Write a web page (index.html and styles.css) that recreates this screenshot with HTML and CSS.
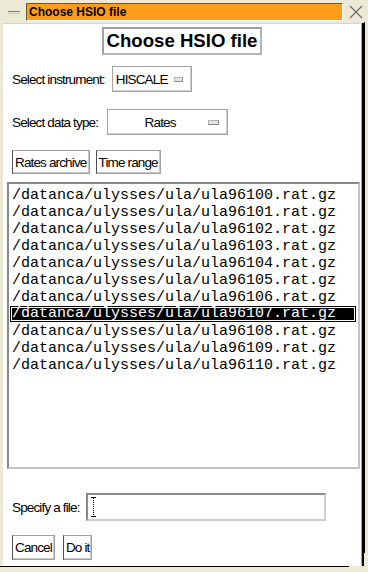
FILE: index.html
```html
<!DOCTYPE html>
<html lang="en">
<head>
    <meta charset="UTF-8">
    <title>Choose HSIO file</title>
    <link rel="stylesheet" href="styles.css">
</head>
<body>

<div class="window">
    <div class="titlebar">
        <span class="minimize"></span>
        <div class="title">Choose HSIO file</div>
        <svg class="close" width="14" height="14" viewBox="0 0 14 14">
            <path d="M1 1 L13 13 M13 1 L1 13" stroke="#6a6a6a" stroke-width="1.2" fill="none"/>
        </svg>
    </div>

    <div class="client">
        <div class="heading">Choose HSIO file</div>

        <div class="row row-instrument">
            <span class="label">Select instrument:</span>
            <div class="menubutton instrument">
                <span class="menutext">HISCALE</span>
                <span class="indicator"></span>
            </div>
        </div>

        <div class="row row-type">
            <span class="label">Select data type:</span>
            <div class="menubutton datatype">
                <span class="menutext">Rates</span>
                <span class="indicator"></span>
            </div>
        </div>

        <div class="row row-buttons">
            <button class="btn">Rates archive</button>
            <button class="btn">Time range</button>
        </div>

        <div class="filelist" id="filelist"></div>

        <div class="row row-file">
            <span class="label">Specify a file:</span>
            <div class="entry">
                <svg class="ibeam" width="5" height="20" viewBox="0 0 5 20">
                    <path d="M0 0.5 H5 M0 19.5 H5" stroke="#000" stroke-width="1"/>
                    <path d="M2.5 1 V19" stroke="#000" stroke-width="1" stroke-dasharray="1 1"/>
                </svg>
            </div>
        </div>

        <div class="row row-actions">
            <button class="btn">Cancel</button>
            <button class="btn">Do it</button>
        </div>
    </div>

    <span class="corner corner-v"></span>
    <span class="corner corner-h"></span>
</div>

<script>
    var lista = document.getElementById('filelist');
    for (var i = 100; i <= 110; i++) {
        var linha = document.createElement('div');
        linha.className = 'fileitem';
        if (i === 107) linha.className += ' selected';
        linha.textContent = '/datanca/ulysses/ula/ula96' + i + '.rat.gz';
        lista.appendChild(linha);
    }
</script>

</body>
</html>
```

FILE: styles.css
```css
body {
    margin: 0;
    background-color: #ecead4;
    font-family: "Liberation Sans", Arial, sans-serif;
}
.window {
    position: relative;
    width: 368px;
    height: 572px;
    overflow: hidden;
}
.titlebar {
    display: flex;
    align-items: center;
    height: 23px;
}
.minimize {
    width: 12px;
    height: 1px;
    margin-left: 8px;
    margin-top: 2px;
    border-top: 1px solid #7c7c7c;
    border-bottom: 1px solid #c8c8b8;
}
.title {
    margin-left: 6px;
    width: 313px;
    height: 16px;
    padding-left: 2px;
    background-color: #ff9d1b;
    border-top: 1px solid #6b5a3a;
    border-left: 1px solid #6b5a3a;
    border-right: 1px solid #fff;
    border-bottom: 1px solid #fff;
    font-weight: bold;
    font-size: 12px;
    line-height: 16px;
    color: #000;
}
.close {
    margin-left: 6px;
}
.client {
    display: flex;
    flex-direction: column;
    width: 358px;
    height: 542px;
    margin-left: 3px;
    background-color: #fff;
    border-right: 1px solid #a8a8a8;
    border-top: 1px solid #d8d8c8;
    box-shadow: 2px 0 0 #000;
}
.heading {
    align-self: center;
    margin-top: 3px;
    height: 24px;
    padding: 0 3px;
    border: 2px solid #b4b4b4;
    border-top-color: #a0a0a0;
    border-left-color: #a0a0a0;
    font-weight: bold;
    font-size: 18.6px;
    line-height: 24px;
    color: #000;
}
.row {
    display: flex;
    align-items: center;
    padding-left: 9px;
}
/* fonte estreita do X11: imitada com espacamento negativo */
.label,
.menubutton,
.btn {
    font-family: "Liberation Sans", Arial, sans-serif;
    font-size: 13.5px;
    letter-spacing: -0.85px;
    color: #000;
}
.row-instrument {
    margin-top: 11px;
    gap: 7px;
}
.row-type {
    margin-top: 17px;
    gap: 9px;
}
.menubutton {
    display: flex;
    align-items: center;
    height: 24px;
    border: 1px solid #a4a4a4;
    box-shadow: inset -1px -1px 0 #d0d0d0;
}
.instrument {
    width: 78px;
}
.instrument .menutext {
    margin-left: 3px;
}
.instrument .indicator {
    margin-left: 6px;
}
.datatype {
    width: 119px;
}
.datatype .menutext {
    flex: 1;
    text-align: center;
    padding-left: 4px;
}
.indicator {
    width: 9px;
    height: 3px;
    margin-right: 8px;
    background-color: #e4e4e4;
    border: 1px solid #8c8c8c;
    border-top-color: #b0b0b0;
    border-left-color: #b0b0b0;
}
.row-buttons {
    margin-top: 15px;
    gap: 6px;
}
.btn {
    height: 24px;
    padding: 0 2px;
    background-color: #fff;
    border: 1px solid #a0a0a0;
    border-left-color: #505050;
    box-shadow: inset -1px -1px 0 #c8c8c8;
    cursor: pointer;
}
.filelist {
    margin-top: 8px;
    margin-left: 4px;
    width: 349px;
    height: 280px;
    padding-top: 3px;
    border: 2px solid #c4c4c4;
    border-top-color: #8a8a8a;
    border-left-color: #8a8a8a;
}
.fileitem {
    height: 17px;
    margin-left: 1px;
    margin-right: 2px;
    padding-left: 2px;
    font-family: "Liberation Mono", "Courier New", monospace;
    font-size: 15px;
    line-height: 17px;
    color: #000;
    white-space: nowrap;
}
.fileitem.selected {
    height: 16px;
    line-height: 16px;
    margin-bottom: 1px;
    background-color: #000;
    color: #fff;
    outline: 1px solid #fff;
    outline-offset: -2px;
}
.row-file {
    margin-top: 24px;
    gap: 6px;
}
.entry {
    display: flex;
    align-items: center;
    width: 233px;
    height: 24px;
    padding-left: 3px;
    border: 2px solid #cdcdcd;
    border-top-color: #8a8a8a;
    border-left-color: #8a8a8a;
}
.row-actions {
    margin-top: 14px;
    gap: 8px;
}
.row-actions .btn {
    height: 25px;
}
.corner {
    position: absolute;
    background-color: #000;
}
.corner-v {
    left: 364px;
    top: 22px;
    width: 1px;
    height: 531px;
}
.corner-h {
    left: 0;
    top: 566px;
    width: 349px;
    height: 1px;
}
```
